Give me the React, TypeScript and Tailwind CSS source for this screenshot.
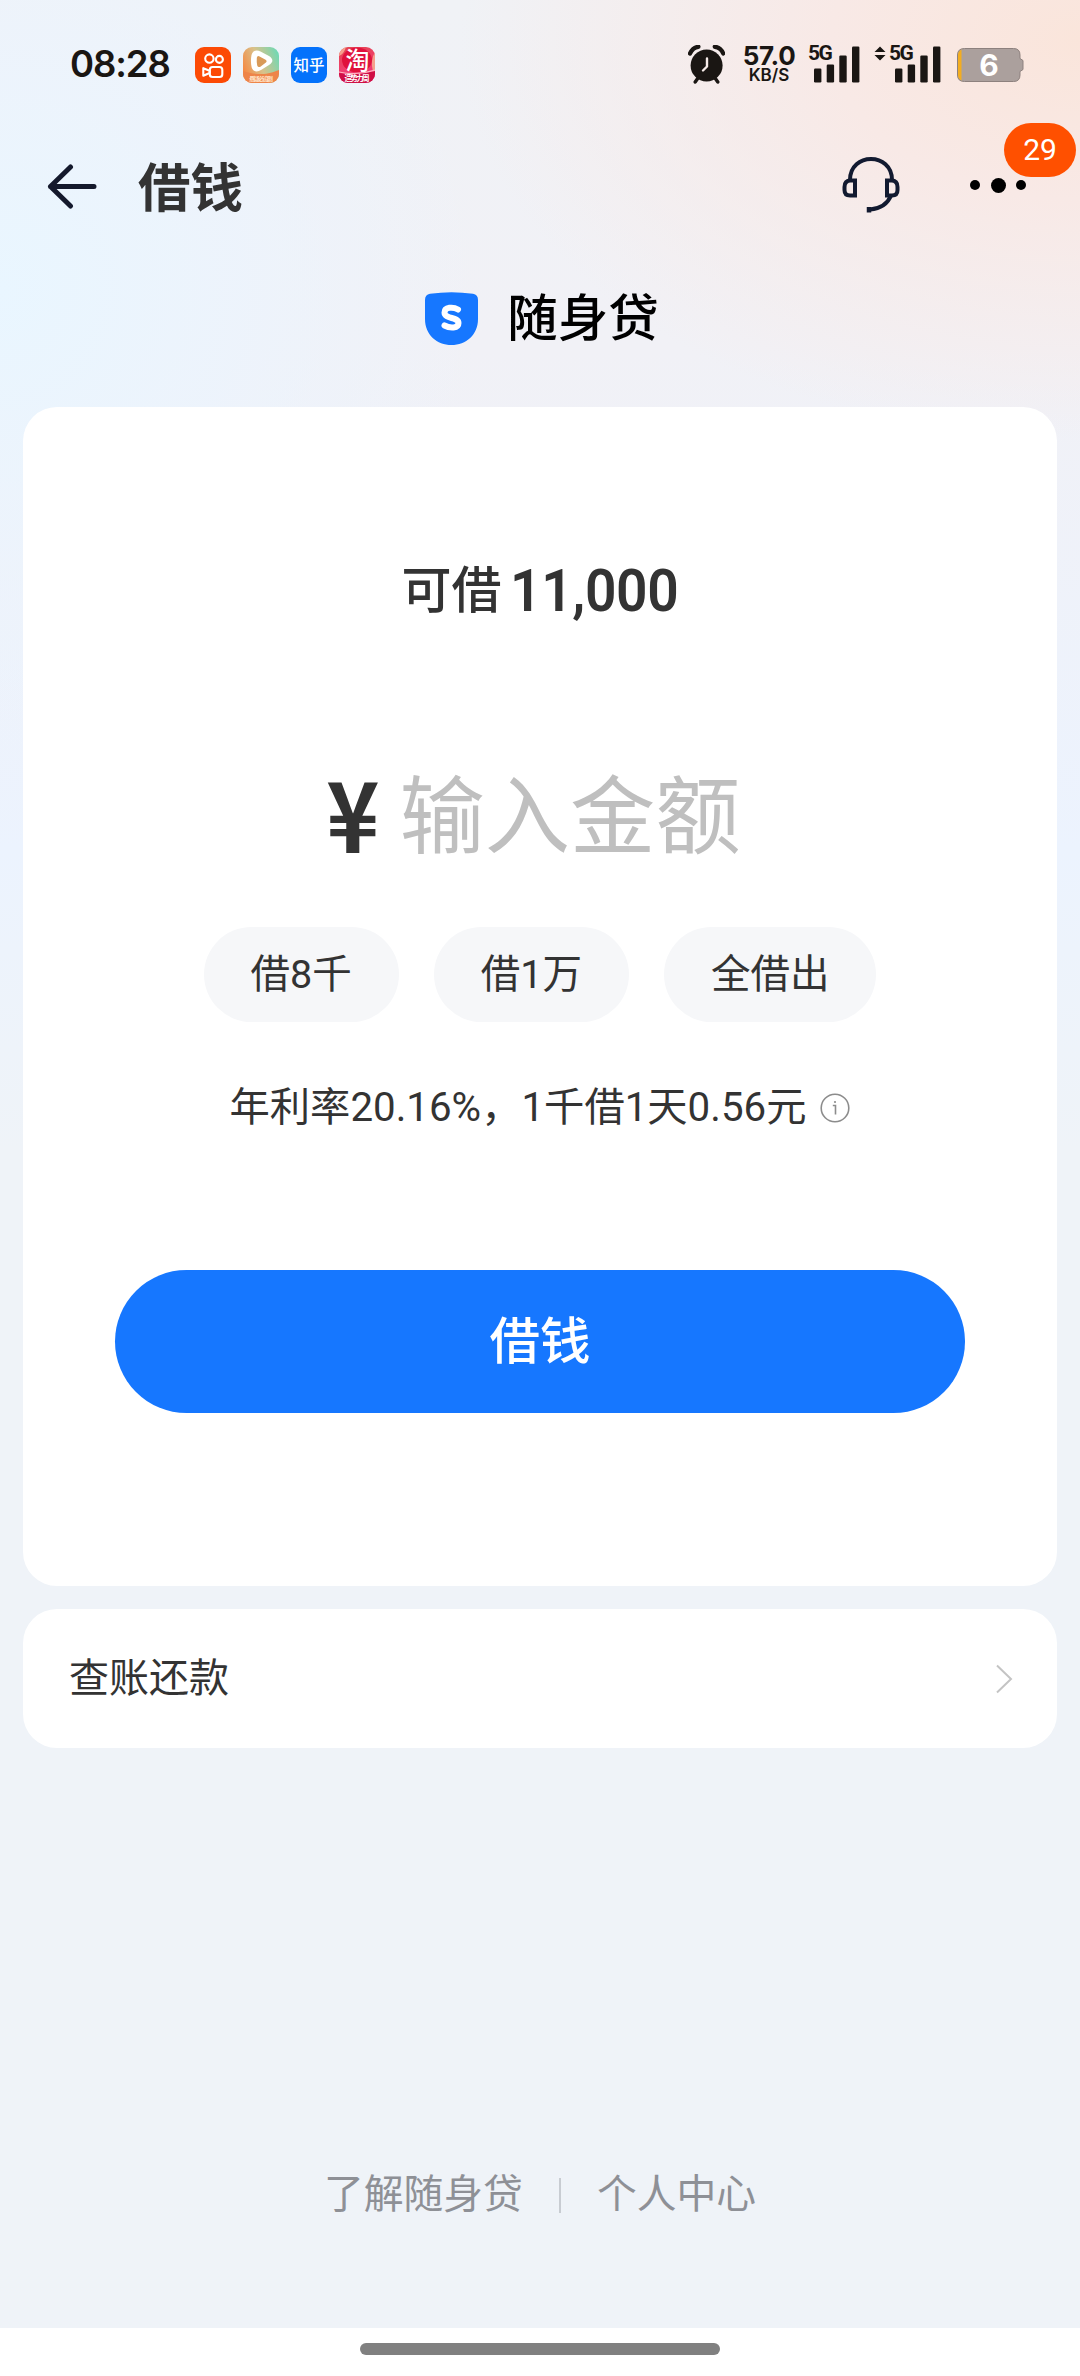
import React from 'react';

const SignalBars = () => (
  <svg className="absolute left-0 top-0" width="46" height="37" viewBox="0 0 46 37" fill="#1a1613">
    <rect x="0" y="22.5" width="7.4" height="14" rx="1.2" />
    <rect x="12.7" y="18.5" width="7.4" height="18" rx="1.2" />
    <rect x="25.3" y="9.5" width="7.4" height="27" rx="1.2" />
    <rect x="38" y="0.5" width="7.4" height="36" rx="1.2" />
  </svg>
);

const KuaishouIcon = () => (
  <svg width="36" height="36" viewBox="0 0 36 36" fill="none">
    <rect width="36" height="36" rx="9" fill="#fc4a05" />
    <g stroke="#fff" strokeWidth="2.1" strokeLinejoin="round">
      <circle cx="14.4" cy="11.6" r="4.2" />
      <circle cx="24.4" cy="12.4" r="3.5" />
      <rect x="14.8" y="20" width="12.5" height="10" rx="2.8" />
      <path d="M8.3 21.200v7.600l6.300-2.800v-2.200z" />
    </g>
  </svg>
);

const VideoIcon = () => (
  <svg width="36" height="36" viewBox="0 0 36 36">
    <defs>
      <linearGradient id="video" x1="0" y1="0.6" x2="1" y2="0.2">
        <stop offset="0" stopColor="#f58a45" />
        <stop offset="0.45" stopColor="#d9c18a" />
        <stop offset="1" stopColor="#6fd9b4" />
      </linearGradient>
      <clipPath id="videoClip">
        <rect width="36" height="36" rx="9" />
      </clipPath>
    </defs>
    <g clipPath="url(#videoClip)">
      <rect width="36" height="36" fill="url(#video)" />
      <path d="M0 24c6 2 10 3 18 3s12-2 18-4v13H0z" fill="#ee8449" />
      <path d="M8.500 8c1.200-4.500 5-5.500 9-3.500l8.500 4.500c4.500 2.800 4.500 6.500 0 9l-8 5c-4 2.500-8 1.600-9.300-2.500-1-4-1-8.500-.2-12.500z" fill="#fff" />
      <path d="M13.800 10.800q.5-2.500 2.800-1.300l6 3.300q2 1.500 0 3l-5.200 3.900q-2.300 1.200-3.200-1.100-.7-3.800-.4-7.800z" fill="#d99a58" />
      <text x="18" y="33.500" fontSize="6" fontWeight="700" textAnchor="middle" fill="#ffe3c8" textLength="24">悬疑必追剧</text>
    </g>
  </svg>
);

const ZhihuIcon = () => (
  <svg width="36" height="36" viewBox="0 0 36 36">
    <rect width="36" height="36" rx="9" fill="#0472fb" />
    <text x="18" y="23.500" fontSize="15.500" fontWeight="500" textAnchor="middle" fill="#fff">知乎</text>
  </svg>
);

const TaobaoIcon = () => (
  <svg width="36" height="36" viewBox="0 0 36 36">
    <defs>
      <linearGradient id="tao" x1="0" y1="0" x2="0.3" y2="1">
        <stop offset="0" stopColor="#e2464f" />
        <stop offset="0.6" stopColor="#f03f6c" />
        <stop offset="1" stopColor="#ee2f7a" />
      </linearGradient>
      <clipPath id="taoClip">
        <rect width="36" height="36" rx="9" />
      </clipPath>
    </defs>
    <g clipPath="url(#taoClip)">
      <rect width="36" height="36" fill="url(#tao)" />
      <path d="M0 9q5-2 7-9H0zM36 5q-5 8-2 20h2z" fill="#f6a08c" />
      <ellipse cx="18" cy="13" rx="15" ry="12.500" fill="#e0123c" />
      <path d="M0 26q18 3 36-2v12H0z" fill="#cf0f45" />
      <path d="M0 25q18 4 36-2" stroke="#ffb4c0" strokeWidth="1.200" fill="none" />
      <text x="18.500" y="21.500" fontSize="24" fontWeight="500" textAnchor="middle" fill="#fff">淘</text>
      <text x="18" y="34" fontSize="7.500" fontWeight="700" textAnchor="middle" fill="#fff" textLength="25">造势力周</text>
    </g>
  </svg>
);

const AlarmIcon = () => (
  <svg width="37" height="39" viewBox="0 0 37 39" fill="none">
    <circle cx="18.600" cy="20.500" r="16" fill="#1a1613" />
    <path d="M2 8.500Q5 2 10.500 1.800M26.700 1.800Q32.500 2 35.200 8.500" stroke="#1a1613" strokeWidth="4.200" strokeLinecap="round" />
    <path d="M10 33l-2.800 4M27 33l2.800 4" stroke="#1a1613" strokeWidth="3.400" strokeLinecap="round" />
    <path d="M19 13.500v8l-4 4" stroke="#f6ebe8" strokeWidth="2.400" strokeLinecap="round" strokeLinejoin="round" />
  </svg>
);

const StatusBar = () => (
  <div className="flex h-[130px] items-start justify-between pl-[70px] pr-[56px] pt-[45px] text-[#1a1613]">
    <div className="flex items-start">
      <span className="w-[125px] whitespace-nowrap pt-px font-[Inter] text-[36.500px] font-semibold leading-[37px] tracking-[-1.100px]">08:28</span>
      <div className="flex gap-3 pt-[2px]">
        <KuaishouIcon />
        <VideoIcon />
        <ZhihuIcon />
        <TaobaoIcon />
      </div>
    </div>
    <div className="flex items-start">
      <AlarmIcon />
      <div className="ml-[16px] flex w-[56px] flex-col items-center font-[Inter]">
        <span className="text-[26px] font-bold leading-[21px] tracking-[-0.3px]">57.0</span>
        <span className="text-[17px] font-semibold leading-[19px]">KB/S</span>
      </div>
      <div className="relative ml-[17px] mt-[0.500px] h-[37px] w-[46px]">
        <SignalBars />
        <span className="absolute -left-[6px] -top-px font-[Roboto] text-[21px] font-bold leading-[17px] tracking-[-1.500px]">5G</span>
      </div>
      <svg className="ml-[14px] mt-px" width="12" height="15" viewBox="0 0 12 15" fill="#1a1613">
        <path d="M6 0.500L11.500 6h-11zM6 14.500L11.500 9h-11z" />
      </svg>
      <div className="relative ml-[9px] mt-[0.500px] h-[37px] w-[46px]">
        <SignalBars />
        <span className="absolute -left-[6px] -top-px font-[Roboto] text-[21px] font-bold leading-[17px] tracking-[-1.500px]">5G</span>
      </div>
      <div className="relative ml-[16px] mt-[3px] h-[34px] w-[67px]">
        <svg width="67" height="34" viewBox="0 0 67 34">
          <path d="M7.500.5h49q6.500 0 6.500 6.500v3.500l3 2v9l-3 2V27q0 6.500-6.500 6.500h-49Q.5 33.500.5 27V7Q.5.500 7.500.500z" fill="#aba09d" stroke="#8d817e" />
          <path d="M4.500 1.500v31Q1 31 1 27V7q0-4 3.500-5.500z" fill="#f3ad20" />
        </svg>
        <span className="absolute left-0 top-0 w-[64px] text-center font-[Inter] text-[30px] font-bold leading-[34px] text-white">6</span>
      </div>
    </div>
  </div>
);

const Header = () => (
  <header className="flex h-[115px] items-center pl-[47px] pr-[55px]">
    <svg className="-mt-[2px]" width="50" height="46" viewBox="0 0 50 46" fill="none" stroke="#14192c" strokeWidth="5" strokeLinecap="round" strokeLinejoin="round">
      <path d="M47 22.500H3.500M23.500 3L3.500 22.500L23.500 42" />
    </svg>
    <h1 className="ml-[41px] mt-[4px] flex-1 text-[52.500px] font-bold leading-none text-[#333]">借钱</h1>
    <svg className="-mt-[3px]" width="58" height="58" viewBox="0 0 58 58" fill="none" stroke="#121a30" strokeWidth="4">
      <path d="M8 23C8 -5 50 -5 50 23" />
      <path d="M13 23.500H8.500Q2.500 23.500 2.500 30v3Q2.500 38.500 8 38.500h5zM45 23.500h4.500q6 0 6 6.500v3q0 5.500-5.500 5.500h-5z" />
      <path d="M49 38.500Q44 51 28 52.500" />
      <path d="M27 50v5.500" strokeWidth="4.500" />
    </svg>
    <div className="relative -mr-px -mt-[5px] ml-[70px] flex w-[56px] items-center justify-between">
      <i className="size-[10px] rounded-full bg-black" />
      <i className="size-[15px] rounded-full bg-black" />
      <i className="size-[10px] rounded-full bg-black" />
      <span className="absolute -top-[55px] left-[34px] h-[54px] w-[72px] rounded-full bg-[#ff5000] text-center font-[Roboto] text-[30px] leading-[54px] text-white">29</span>
    </div>
  </header>
);

const Chip = ({ label }: { label: string }) => (
  <button className="h-[95px] rounded-full bg-[#f6f7f9] px-[47px] text-[39.500px] leading-none text-[#333]">{label}</button>
);

export default function App() {
  return (
    <div className="flex h-[2376px] w-[1080px] flex-col bg-[#eff3f8] font-[Roboto,'Noto_Sans_CJK_SC',sans-serif]">
      <div className="flex flex-1 flex-col bg-[radial-gradient(ellipse_620px_400px_at_1080px_40px,#fae5db,#f8e9e6_40%,transparent),radial-gradient(ellipse_480px_480px_at_0px_290px,#e9f6ff,#ecf4fdcc_50%,transparent),linear-gradient(180deg,#f0f2f6,#f1f1f6_350px,#ecf3fe_850px,#eff3f8_1150px)]">
        <StatusBar />
        <Header />
        <div className="flex h-[162px] items-start justify-center pl-[4px] pt-[44px]">
          <svg className="mt-[3px]" width="53" height="53" viewBox="0 0 53 53">
            <path d="M0 8Q0 2.500 5 1.800Q26.500-1.500 48 1.800Q53 2.500 53 8v19C53 43 41 53 26.500 53S0 43 0 27z" fill="#1677ff" />
            <path d="M33 17.500C28 14.500 19.500 15 19.500 20.500C19.500 27.500 33.500 24.500 33.500 31C33.500 36.500 25 36.500 19.500 33.500" fill="none" stroke="#fff" strokeWidth="6" strokeLinecap="round" />
          </svg>
          <span className="ml-[29px] text-[50.500px] font-medium leading-[60px] text-black">随身贷</span>
        </div>

        <main className="mx-[23px] flex h-[1179px] flex-col items-center rounded-[34px] bg-white text-[#333]">
          <div className="mt-[149px] flex h-[70px] items-center">
            <span className="text-[50px] font-medium leading-none">可借</span>
            <span className="ml-[8px] w-[169px] origin-left scale-x-[0.92] whitespace-nowrap text-[60px] font-semibold leading-none tracking-[-0.4px]">11,000</span>
          </div>
          <div className="mt-[129px] flex h-[110px] items-center pr-[15px]">
            <span className="w-[54px] scale-x-[0.92] text-center font-['Noto_Sans_CJK_SC'] text-[98px] font-bold leading-none">¥</span>
            <span className="ml-[21px] mt-[17px] text-[85.300px] leading-none text-[#bfbfbf]">输入金额</span>
          </div>
          <div className="mt-[62px] flex gap-[35px]">
            <Chip label="借8千" />
            <Chip label="借1万" />
            <Chip label="全借出" />
          </div>
          <div className="mt-[56px] flex h-[60px] items-center">
            <span className="pt-px text-[40.300px] leading-none">年利率20.16%，1千借1天0.56元</span>
            <svg className="ml-[14px]" width="30" height="30" viewBox="0 0 30 30" fill="none" stroke="#8c8c8c" strokeWidth="1.600">
              <circle cx="15" cy="15" r="13.800" />
              <path d="M12.800 12.500H15.500v9" />
              <circle cx="15" cy="9" r="1.100" fill="#8c8c8c" stroke="none" />
            </svg>
          </div>
          <button className="mt-[132px] h-[143px] w-[850px] rounded-full bg-[#1677ff] pt-px text-[50.500px] font-medium text-white">借钱</button>
        </main>

        <div className="mx-[23px] mt-[23px] flex h-[139px] items-center justify-between rounded-[34px] bg-white pl-[46px] pr-[44px]">
          <span className="pt-px text-[40px] leading-none text-[#333]">查账还款</span>
          <svg width="18" height="30" viewBox="0 0 18 30" fill="none" stroke="#c4c4c4" strokeWidth="2">
            <path d="M2 1.500L16 15L2 28.500" />
          </svg>
        </div>

        <footer className="mt-auto flex items-center justify-center pb-[103px] text-[39.800px] leading-[60px] text-[#8e9096]">
          <span>了解随身贷</span>
          <i className="mx-[36px] h-[35px] w-[2px] bg-[#c8ccd2]" />
          <span>个人中心</span>
        </footer>
      </div>
      <div className="flex h-[48px] justify-center bg-white pt-[15px]">
        <div className="h-3 w-[360px] rounded-full bg-[#808080]" />
      </div>
    </div>
  );
}
